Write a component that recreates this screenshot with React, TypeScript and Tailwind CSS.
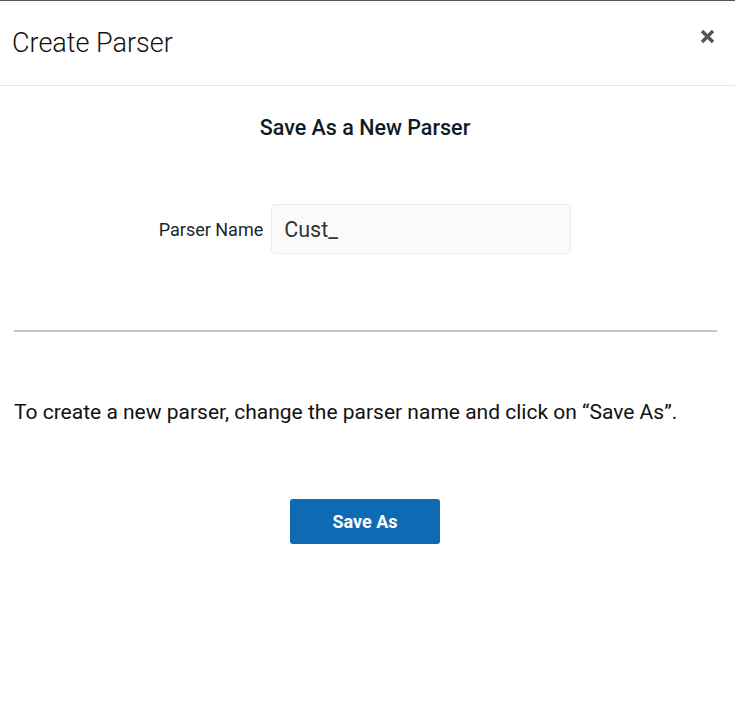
export default function App() {
  return (
    <div
      className="min-h-[706px] w-full border-t border-[#555] bg-white text-[#1b2631]"
      style={{ fontFamily: "Roboto, 'Noto Sans', sans-serif" }}
    >
      <header className="flex h-[85px] items-center justify-between border-b border-[#e5e5e5] pl-[12px] pr-[20px]">
        <h1 className="text-[27px] font-light text-[#111]">Create Parser</h1>
        <button type="button" aria-label="Close" className="-mt-[14px] text-[#555]">
          <svg width="15" height="15" viewBox="0 0 15 15">
            <path d="M2 2 L13 13 M13 2 L2 13" stroke="currentColor" strokeWidth="3.4" strokeLinecap="butt" />
          </svg>
        </button>
      </header>

      <h2 className="mt-[28px] pr-[5px] text-center text-[21.5px] leading-7 font-medium text-[#0f1c28]">
        Save As a New Parser
      </h2>

      <div className="mt-[62px] flex items-center justify-center gap-2 pr-[5px]">
        <label className="text-[18px] text-[#1b2631]">Parser Name</label>
        <input
          defaultValue="Cust_"
          className="h-[50px] w-[300px] rounded border border-[#ececec] bg-[#fafafa] pr-3 pl-[12px] text-[21.5px] text-[#333] outline-none"
        />
      </div>

      <div className="mt-[76px] mr-[18px] ml-[14px] h-[2px] bg-[#c3c8d7]" />

      <p className="mt-[66px] px-[14px] text-[21px] leading-7 text-[#111]">
        To create a new parser, change the parser name and click on “Save As”.
      </p>

      <div className="mt-[73px] flex justify-center pr-[5px]">
        <button
          type="button"
          className="h-[45px] w-[150px] rounded-[3px] bg-[#0f6ab4] text-[18px] font-bold text-white"
        >
          Save As
        </button>
      </div>
    </div>
  );
}
